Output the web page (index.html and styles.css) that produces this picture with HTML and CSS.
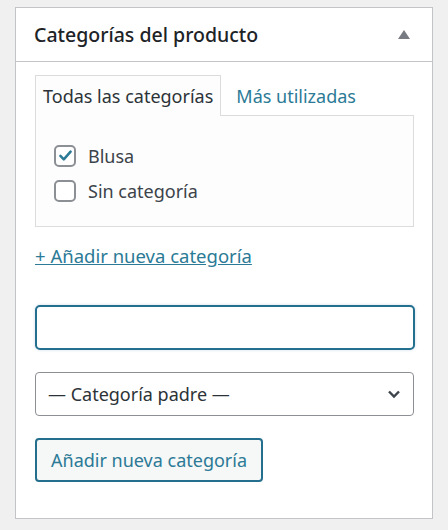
FILE: index.html
```html
<!DOCTYPE html>
<html lang="es">
<head>
<meta charset="UTF-8">
<meta name="viewport" content="width=device-width, initial-scale=1.0">
<title>Categorías del producto</title>
<link rel="stylesheet" href="styles.css">
</head>
<body>
    <div class="postbox">
        <div class="postbox-header">
            <h2>Categorías del producto</h2>
            <span class="toggle"></span>
        </div>
        <div class="inside">
            <ul class="tabs">
                <li class="tab active">Todas las categorías</li>
                <li class="tab"><a href="#">Más utilizadas</a></li>
            </ul>
            <div class="tab-panel">
                <label class="cat"><span class="check checked">
                    <svg viewBox="0 0 20 20" width="17" height="17"><path d="M4 10.5l4 4 8-9" fill="none" stroke="#2b7a96" stroke-width="3" stroke-linecap="round" stroke-linejoin="round"/></svg>
                </span>Blusa</label>
                <label class="cat"><span class="check"></span>Sin categoría</label>
            </div>
            <a class="add-link" href="#">+ Añadir nueva categoría</a>
            <div class="new-cat">
                <input type="text" class="text-input">
                <div class="select">
                    <span>— Categoría padre —</span>
                    <svg viewBox="0 0 20 20" width="20" height="20"><path d="M5 7.5l5 5 5-5" fill="none" stroke="#3c434a" stroke-width="2.4"/></svg>
                </div>
                <button class="add-button">Añadir nueva categoría</button>
            </div>
        </div>
    </div>
</body>
</html>
```

FILE: styles.css
```css
body {
    margin: 0;
    padding: 7px 15px;
    background-color: #f0f0f1;
    font-family: "Noto Sans", sans-serif;
    color: #3c434a;
}
.postbox {
    width: 416px;
    background-color: #fff;
    border: 1px solid #c3c4c7;
    height: 510px;
}
.postbox-header {
    display: flex;
    justify-content: space-between;
    align-items: center;
    height: 53px;
    padding: 0 22px 0 18px;
    border-bottom: 1px solid #c3c4c7;
}
.postbox-header h2 {
    margin: 0;
    font-size: 19.5px;
    font-weight: 500;
    color: #1d2327;
}
.toggle {
    width: 0;
    height: 0;
    border-left: 6px solid transparent;
    border-right: 6px solid transparent;
    border-bottom: 9px solid #787c82;
}
.inside {
    padding: 13px 18px 0 19px;
}
.tabs {
    display: flex;
    margin: 0;
    padding: 0;
    list-style: none;
}
.tab {
    height: 40px;
    line-height: 40px;
    padding: 0 7px;
    font-size: 18px;
    border: 1px solid transparent;
    border-bottom: none;
    margin-bottom: -1px;
    position: relative;
}
.tab + .tab {
    margin-left: 7px;
}
.tab.active {
    background-color: #fdfdfd;
    border-color: #dcdcde;
    color: #2c3338;
}
.tab a {
    color: #2b7a96;
    text-decoration: none;
}
.tab-panel {
    border: 1px solid #dcdcde;
    background-color: #fdfdfd;
    height: 112px;
    padding: 32px 18px 0;
    box-sizing: border-box;
}
.cat {
    display: flex;
    align-items: center;
    height: 35px;
    margin-top: -10px;
    margin-bottom: 10px;
    font-size: 18px;
    color: #3c434a;
}
.check {
    width: 22px;
    height: 22px;
    border: 2px solid #8c8f94;
    border-radius: 5px;
    box-sizing: border-box;
    margin-right: 12px;
    display: flex;
    align-items: center;
    justify-content: center;
    background-color: #fff;
}
.add-link {
    display: inline-block;
    margin-top: 16px;
    font-size: 18.5px;
    color: #2b7a96;
    text-decoration: underline;
}
.new-cat {
    display: flex;
    flex-direction: column;
    align-items: flex-start;
    margin-top: 37px;
}
.text-input {
    width: 380px;
    height: 45px;
    box-sizing: border-box;
    border: 2px solid #236f8d;
    border-radius: 5px;
    margin: 0;
    box-shadow: 0 0 3px rgba(34, 113, 177, 0.25);
}
.select {
    display: flex;
    justify-content: space-between;
    align-items: center;
    width: 379px;
    height: 44px;
    box-sizing: border-box;
    margin-top: 22px;
    padding: 0 9px 0 12px;
    border: 1px solid #8c8f94;
    border-radius: 4px;
    font-size: 18px;
    color: #2c3338;
}
.add-button {
    margin-top: 22px;
    height: 44px;
    padding: 0 14px;
    font-family: "Noto Sans", sans-serif;
    font-size: 18px;
    color: #2b7a96;
    background-color: #f6f7f7;
    border: 2px solid #236f8d;
    border-radius: 4px;
}
```
